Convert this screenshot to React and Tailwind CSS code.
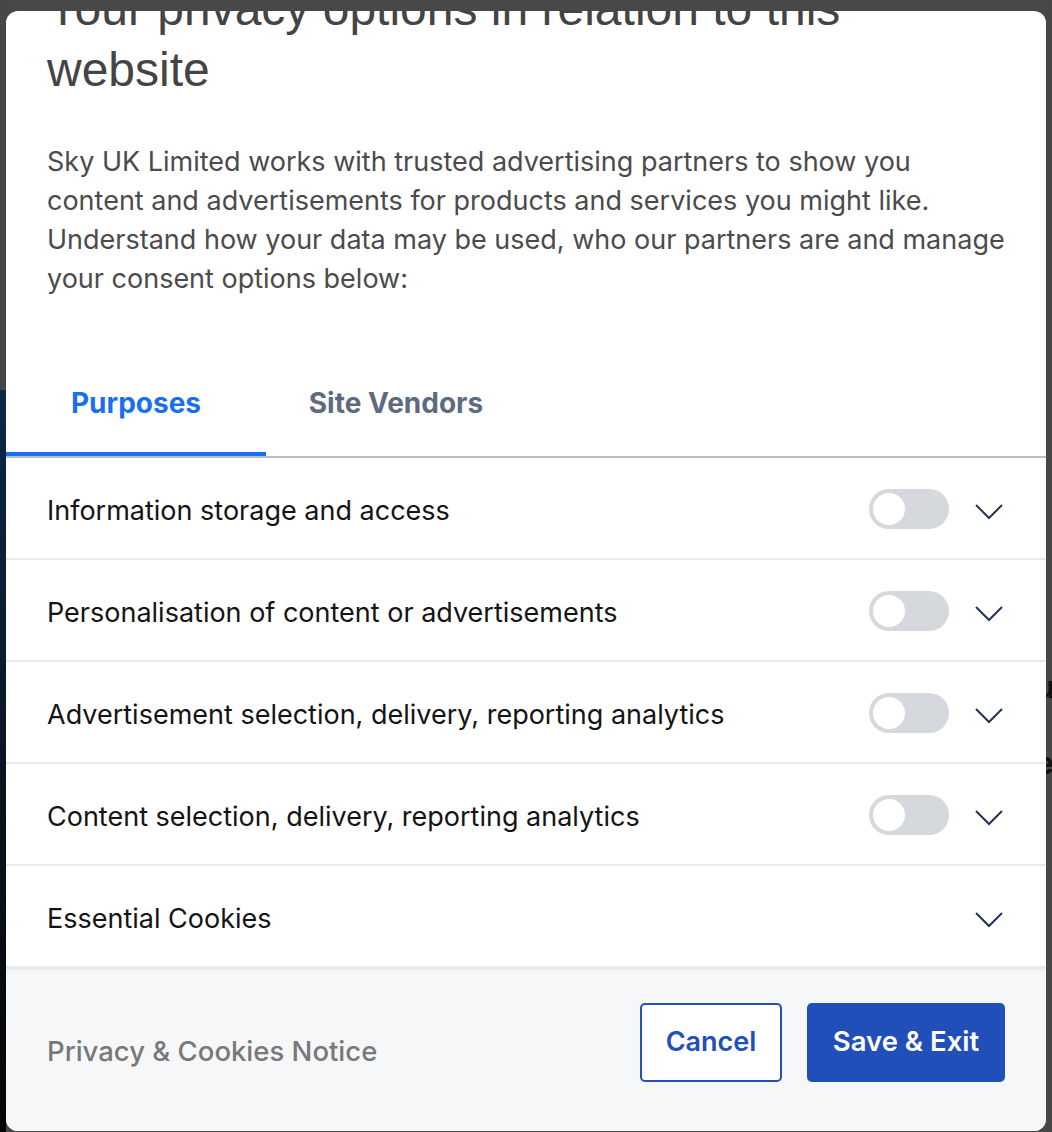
const purposes = [
  { label: "Information storage and access", toggle: true },
  { label: "Personalisation of content or advertisements", toggle: true },
  { label: "Advertisement selection, delivery, reporting analytics", toggle: true },
  { label: "Content selection, delivery, reporting analytics", toggle: true },
  { label: "Essential Cookies", toggle: false },
];

function Chevron() {
  return (
    <svg width="30" height="17" viewBox="0 0 30 17" fill="none" className="shrink-0 mt-[4px]">
      <path d="M2 2l13 13L28 2" stroke="#233554" strokeWidth="2" />
    </svg>
  );
}

function Toggle() {
  return (
    <div className="w-[80px] h-[40px] rounded-full bg-[#d5d8dd] p-[4px] flex items-center">
      <div className="w-[32px] h-[32px] rounded-full bg-white" />
    </div>
  );
}

function PurposeRow({ label, toggle }) {
  return (
    <div className="h-[102px] flex items-center border-b-2 border-[#e7e9ec] pl-[41px] pr-[42px] pt-[2px]">
      <span className="flex-1 text-[27px] text-[#141414] pt-[4px]">{label}</span>
      {toggle && <Toggle />}
      <div className="ml-[25px]">
        <Chevron />
      </div>
    </div>
  );
}

export default function App() {
  return (
    <div
      className="w-[1052px] h-[1132px] bg-[#484848] flex overflow-hidden"
      style={{ fontFamily: "Inter, 'Noto Sans', sans-serif" }}
    >
      {/* page behind the overlay, left edge */}
      <div className="w-[6px] flex flex-col">
        <div className="h-[390px] bg-[#474747]" />
        <div className="flex-1 bg-gradient-to-b from-[#0b2948] via-[#0a1622] to-[#050505]" />
      </div>

      <div className="w-[1040px] mt-[11px] mb-[1px] bg-white rounded-[12px] overflow-hidden flex flex-col">
        <div className="px-[41px]">
          <h1
            className="-mt-[33px] text-[48px] leading-[61px] text-[#444444]"
            style={{ fontFamily: "'Liberation Sans', Arial, sans-serif" }}
          >
            Your privacy options in relation to this
            <br />
            website
          </h1>
          <p className="mt-[42px] text-[27px] leading-[39px] text-[#4b4b4b]">
            Sky UK Limited works with trusted advertising partners to show you
            content and advertisements for products and services you might like.
            Understand how your data may be used, who our partners are and manage
            your consent options below:
          </p>
        </div>

        <div className="mt-[52px] flex border-b-2 border-[#bdbdbd]">
          <div className="w-[260px] h-[106px] flex items-center justify-center border-b-4 border-[#1a6ff0] text-[28px] font-bold text-[#1a6ff0] pt-[4px]">
            Purposes
          </div>
          <div className="w-[260px] h-[106px] flex items-center justify-center text-[28px] font-bold text-[#5e6a7d]">
            Site Vendors
          </div>
        </div>

        <div>
          {purposes.map((p) => (
            <PurposeRow key={p.label} {...p} />
          ))}
        </div>

        <div className="flex-1 bg-[#f6f7f9] border-t-2 border-[#eaecef] flex items-center px-[41px]">
          <a className="flex-1 text-[27.5px] font-medium text-[#787878] pt-[2px]">
            Privacy &amp; Cookies Notice
          </a>
          <div className="flex gap-[25px] mb-[17px]">
            <button className="w-[142px] h-[79px] rounded-[5px] border-2 border-[#2250b8] bg-white text-[27px] font-semibold text-[#2250b8]">
              Cancel
            </button>
            <button className="w-[198px] h-[79px] rounded-[5px] bg-[#214fb9] text-[27.5px] font-semibold text-white">
              Save &amp; Exit
            </button>
          </div>
        </div>
      </div>

      {/* page behind the overlay, right edge */}
      <div className="w-[6px] bg-[#474747] flex flex-col pt-[670px] gap-[4px] overflow-hidden">
        <span className="text-[30px] leading-[34px] font-bold text-[#111] -ml-[10px]">u</span>
        <span className="text-[30px] leading-[34px] font-bold text-[#111] -ml-[10px]">i</span>
        <span className="text-[30px] leading-[34px] font-bold text-[#111] -ml-[10px]">e</span>
      </div>
    </div>
  );
}
